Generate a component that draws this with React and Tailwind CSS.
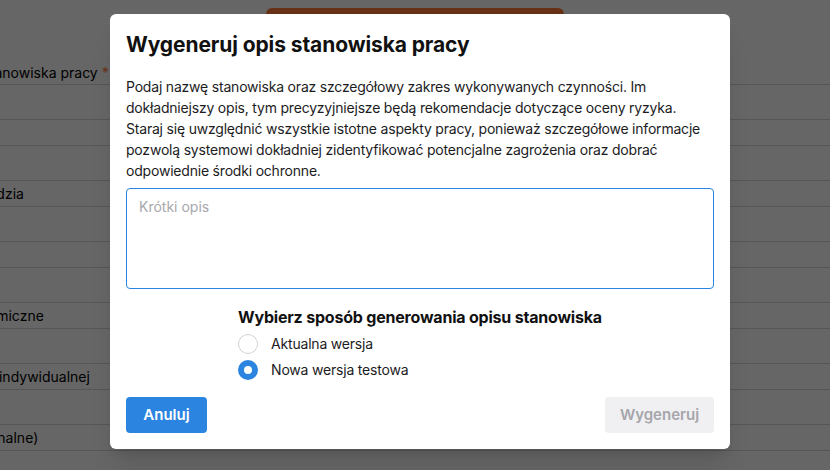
import React, { useState } from 'react';

// Wiersze formularza w tle (widoczne tylko częściowo pod nakładką)
const rows = [
  null,
  { text: 'Narzędzia', shift: '-ml-[43px]' },
  null,
  { text: 'Czynniki chemiczne', shift: '-ml-[89px]' },
  { text: 'Środki ochrony indywidualnej', shift: '-ml-[105px]' },
  { text: 'Uwagi (opcjonalne)', shift: '-ml-[90px]' },
  null,
];

const RadioOption = ({ label, checked, onChange }) => (
  <label className="flex h-[26px] items-center gap-[13px] cursor-pointer">
    <span
      className={`flex h-5 w-5 items-center justify-center rounded-full ${
        checked ? 'bg-[#2b84e0]' : 'border border-[#d4d4d8] bg-white'
      }`}
    >
      {checked && <span className="h-2 w-2 rounded-full bg-white" />}
    </span>
    <input type="radio" className="hidden" checked={checked} onChange={onChange} />
    <span className="text-sm tracking-[-0.2px] text-[#1c1c1e]">{label}</span>
  </label>
);

export default function App() {
  const [mode, setMode] = useState('new');
  const [text, setText] = useState('');

  return (
    <div
      className="relative h-[470px] w-[830px] overflow-hidden bg-white"
      style={{ fontFamily: 'Inter, "Noto Sans", sans-serif' }}
    >
      {/* Strona w tle */}
      <div className="flex justify-center pt-2">
        <div className="h-10 w-[298px] rounded-md bg-[#ff7a32]" />
      </div>
      <div className="mt-[10px] flex h-[26px] items-end pb-[1px] whitespace-nowrap text-sm text-black">
        <span className="-ml-[67px]">
          Nazwa stanowiska pracy <span className="text-[#ff7a32]">*</span>
        </span>
      </div>
      {rows.map((row, i) => (
        <div key={i}>
          <div className="h-[35px] border-t border-[#d7d7d7]" />
          <div className="flex h-[26px] items-center whitespace-nowrap border-t border-[#d7d7d7] text-sm text-black">
            {row && <span className={row.shift}>{row.text}</span>}
          </div>
        </div>
      ))}

      {/* Nakładka */}
      <div className="absolute inset-0 bg-black/60" />

      {/* Okno modalne */}
      <div className="absolute left-[110px] top-[14px] w-[620px] rounded-md bg-white p-4 shadow-xl">
        <h2 className="text-[21px] font-bold leading-[30px] tracking-[-0.1px] text-[#111]">
          Wygeneruj opis stanowiska pracy
        </h2>
        <p className="mt-4 text-sm leading-[21px] tracking-[-0.2px] text-[#1c1c1e]">
          Podaj nazwę stanowiska oraz szczegółowy zakres wykonywanych czynności. Im
          dokładniejszy opis, tym precyzyjniejsze będą rekomendacje dotyczące oceny ryzyka.
          Staraj się uwzględnić wszystkie istotne aspekty pracy, ponieważ szczegółowe informacje
          pozwolą systemowi dokładniej zidentyfikować potencjalne zagrożenia oraz dobrać
          odpowiednie środki ochronne.
        </p>
        <textarea
          value={text}
          onChange={(e) => setText(e.target.value)}
          placeholder="Krótki opis"
          className="mt-[7px] block h-[101px] w-full resize-none rounded border border-[#2b84e0] px-3 py-2 text-sm leading-5 text-[#1c1c1e] outline-none placeholder:text-[#a8a8ad]"
        />

        <div className="mt-4 flex justify-center">
          <div>
            <h3 className="text-base font-bold leading-6 tracking-[-0.2px] text-[#111]">
              Wybierz sposób generowania opisu stanowiska
            </h3>
            <div className="mt-[2px]">
              <RadioOption
                label="Aktualna wersja"
                checked={mode === 'current'}
                onChange={() => setMode('current')}
              />
              <RadioOption
                label="Nowa wersja testowa"
                checked={mode === 'new'}
                onChange={() => setMode('new')}
              />
            </div>
          </div>
        </div>

        <div className="mt-[14px] flex items-center justify-between">
          <button className="h-9 w-[81px] rounded bg-[#2b84e0] text-[15px] font-semibold text-white">
            Anuluj
          </button>
          <button
            disabled={!text}
            className="h-9 w-[109px] rounded bg-[#f0f0f2] text-[15px] font-semibold text-[#a6a6ab]"
          >
            Wygeneruj
          </button>
        </div>
      </div>
    </div>
  );
}
